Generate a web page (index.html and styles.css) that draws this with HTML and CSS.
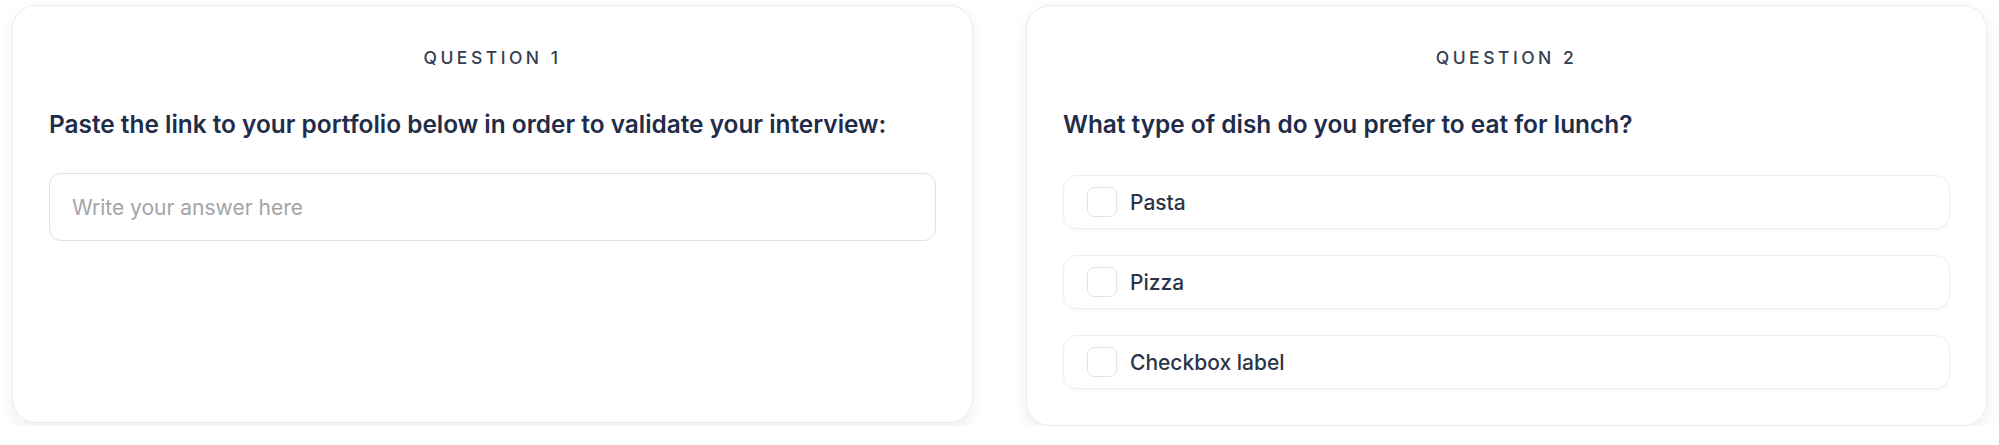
FILE: index.html
```html
<!DOCTYPE html>
<html lang="en">
<head>
<meta charset="utf-8">
<title>Questions</title>
<link rel="stylesheet" href="styles.css">
</head>
<body>
<main class="grid">
  <section class="card card--short">
    <div class="label">QUESTION 1</div>
    <h2 class="title">Paste the link to your portfolio below in order to validate your interview:</h2>
    <input class="answer" type="text" placeholder="Write your answer here">
  </section>
  <section class="card">
    <div class="label">QUESTION 2</div>
    <h2 class="title">What type of dish do you prefer to eat for lunch?</h2>
    <div class="options">
      <label class="option"><span class="box"></span><span class="opt-text">Pasta</span></label>
      <label class="option"><span class="box"></span><span class="opt-text">Pizza</span></label>
      <label class="option"><span class="box"></span><span class="opt-text">Checkbox label</span></label>
    </div>
  </section>
</main>
</body>
</html>
```
FILE: styles.css
```css
* { box-sizing: border-box; }
html, body { background: #ffffff; }
body {
  margin: 0;
  padding: 5px 12px 0 12px;
  font-family: Inter, "Noto Sans", sans-serif;
  color: #1f2b45;
}
.grid {
  display: grid;
  grid-template-columns: 1fr 1fr;
  column-gap: 53px;
  align-items: start;
}
.card {
  background: #fff;
  border: 1px solid #ebebeb;
  border-radius: 24px;
  box-shadow: 0 6px 16px rgba(20, 30, 50, 0.07);
  padding: 40px 36px 36px;
}
.card--short { min-height: 418px; }
.label {
  text-align: center;
  font-size: 17.5px;
  line-height: 24px;
  letter-spacing: 0.2em;
  color: #363e50;
  font-weight: 500;
}
.title {
  margin: 38px 0 0;
  font-size: 24.4px;
  line-height: 32px;
  font-weight: 600;
  color: #1f2d4a;
}
.answer {
  display: block;
  width: 100%;
  height: 68px;
  margin-top: 33px;
  border: 1.5px solid #e0e2e5;
  border-radius: 12px;
  padding: 0 22px;
  font-family: inherit;
  font-size: 21px;
  color: #1f2d4a;
  outline: none;
  background: #fff;
}
.answer::placeholder { color: #a3a5a8; }
.options {
  margin-top: 35px;
  display: flex;
  flex-direction: column;
  gap: 26px;
}
.option {
  display: flex;
  align-items: center;
  gap: 13px;
  height: 54px;
  padding: 0 23px;
  border: 1px solid #eceef0;
  border-radius: 14px;
  box-shadow: 0 1px 3px rgba(20, 30, 50, 0.04);
}
.box {
  width: 30px;
  height: 30px;
  border: 1.5px solid #e2e4e7;
  border-radius: 7px;
  flex: none;
}
.opt-text {
  font-size: 21px;
  font-weight: 500;
  color: #2a3549;
}
```
